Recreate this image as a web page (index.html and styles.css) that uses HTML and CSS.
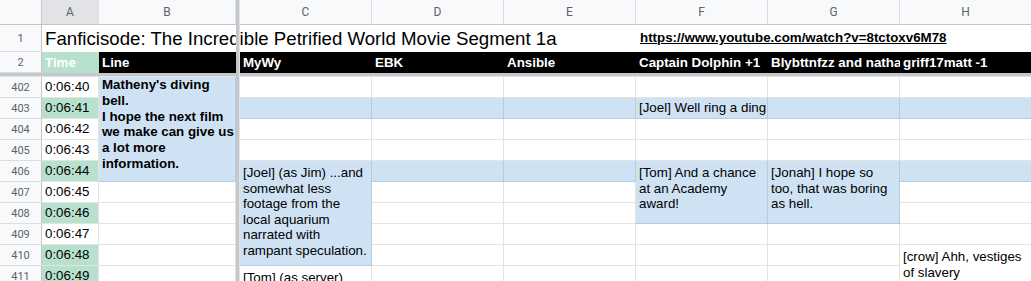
FILE: index.html
```html
<!DOCTYPE html>
<html>
	<head>
		<meta http-equiv="Content-Type" content="text/html; charset=utf-8" />
		<title>Fanficisode</title>
		<link rel="stylesheet" href="styles.css">
	</head>
	<body>
		<div class="sheet">
			<!-- frozen bars -->
			<div class="freeze-col"></div>
			<div class="freeze-row"></div>

			<!-- column headers -->
			<div class="hd hd-corner"></div>
			<div class="hd hd-col hd-active">A</div>
			<div class="hd hd-col">B</div>
			<div class="hd hd-col">C</div>
			<div class="hd hd-col">D</div>
			<div class="hd hd-col">E</div>
			<div class="hd hd-col">F</div>
			<div class="hd hd-col">G</div>
			<div class="hd hd-col">H</div>

			<!-- row 1 -->
			<div class="hd hd-row">1</div>
			<div class="cell title">Fanficisode: The Incredible Petrified World Movie Segment 1a</div>
			<div class="cell link"><span>https://www.youtube.com/watch?v=8tctoxv6M78</span></div>

			<!-- row 2 -->
			<div class="hd hd-row">2</div>
			<div class="cell th th-green">Time</div>
			<div class="cell th">Line</div>
			<div class="cell th">MyWy</div>
			<div class="cell th">EBK</div>
			<div class="cell th">Ansible</div>
			<div class="cell th">Captain Dolphin +1</div>
			<div class="cell th">Blybttnfzz and nathan</div>
			<div class="cell th">griff17matt -1</div>

			<!-- 402 -->
			<div class="hd hd-row">402</div>
			<div class="cell">0:06:40</div>
			<div class="cell blue wrap bold span5">Matheny's diving bell.<br>I hope the next film we make can give us a lot more information.</div>
			<div class="cell"></div><div class="cell"></div><div class="cell"></div>
			<div class="cell"></div><div class="cell"></div><div class="cell"></div>

			<!-- 403 -->
			<div class="hd hd-row">403</div>
			<div class="cell green">0:06:41</div>
			<div class="cell blue"></div><div class="cell blue"></div><div class="cell blue"></div>
			<div class="cell blue">[Joel] Well ring a ding</div>
			<div class="cell blue"></div><div class="cell blue"></div>

			<!-- 404 -->
			<div class="hd hd-row">404</div>
			<div class="cell">0:06:42</div>
			<div class="cell"></div><div class="cell"></div><div class="cell"></div>
			<div class="cell"></div><div class="cell"></div><div class="cell"></div>

			<!-- 405 -->
			<div class="hd hd-row">405</div>
			<div class="cell">0:06:43</div>
			<div class="cell"></div><div class="cell"></div><div class="cell"></div>
			<div class="cell"></div><div class="cell"></div><div class="cell"></div>

			<!-- 406 -->
			<div class="hd hd-row">406</div>
			<div class="cell green">0:06:44</div>
			<div class="cell blue wrap span5">[Joel] (as Jim) ...and somewhat less footage from the local aquarium narrated with rampant speculation.</div>
			<div class="cell blue"></div>
			<div class="cell blue"></div>
			<div class="cell blue wrap span3">[Tom] And a chance at an Academy award!</div>
			<div class="cell blue wrap span3">[Jonah] I hope so too, that was boring as hell.</div>
			<div class="cell blue"></div>

			<!-- 407 -->
			<div class="hd hd-row">407</div>
			<div class="cell">0:06:45</div>
			<div class="cell"></div>
			<div class="cell"></div><div class="cell"></div>
			<div class="cell"></div>

			<!-- 408 -->
			<div class="hd hd-row">408</div>
			<div class="cell green">0:06:46</div>
			<div class="cell"></div>
			<div class="cell"></div><div class="cell"></div>
			<div class="cell"></div>

			<!-- 409 -->
			<div class="hd hd-row">409</div>
			<div class="cell">0:06:47</div>
			<div class="cell"></div>
			<div class="cell"></div><div class="cell"></div>
			<div class="cell"></div><div class="cell"></div><div class="cell"></div>

			<!-- 410 -->
			<div class="hd hd-row">410</div>
			<div class="cell green">0:06:48</div>
			<div class="cell"></div>
			<div class="cell"></div><div class="cell"></div>
			<div class="cell"></div><div class="cell"></div>
			<div class="cell wrap span2">[crow] Ahh, vestiges of slavery</div>

			<!-- 411 -->
			<div class="hd hd-row">411</div>
			<div class="cell green">0:06:49</div>
			<div class="cell"></div>
			<div class="cell wrap">[Tom] (as server)</div>
			<div class="cell"></div><div class="cell"></div>
			<div class="cell"></div><div class="cell"></div>
		</div>
	</body>
</html>
```
FILE: styles.css
```css
html, body{
	margin: 0;
	padding: 0;
	background: #FFFFFF;
	overflow: hidden;
}
.sheet{
	display: grid;
	grid-template-columns: 42px 57px 137px 4px repeat(6, 132px);
	grid-template-rows: 25px 27px 21px 4px repeat(10, 21px);
	font-family: "Liberation Sans", Arial, sans-serif;
	font-size: 13.33px;
	color: #000;
}
/* frozen bars */
.freeze-col{
	grid-column: 4;
	grid-row: 1 / -1;
	background: #c4c7cb;
	border-right: 1px solid #dfe3e8;
	z-index: 2;
}
.freeze-row{
	grid-column: 1 / -1;
	grid-row: 4;
	background: #c4c7cb;
	border-bottom: 1px solid #dfe3e8;
	z-index: 1;
}
/* headers */
.hd{
	box-sizing: border-box;
	background: #f8f9fa;
	color: #5f6368;
	font-family: Roboto, "Liberation Sans", sans-serif;
	font-size: 11px;
	display: flex;
	align-items: center;
	justify-content: center;
	border-right: 1px solid #c4c7c5;
	border-bottom: 1px solid #c4c7c5;
}
.hd-col{
	font-size: 12px;
	border-right-color: #dadce0;
}
.hd-active{
	background: #e1e3e6;
}
.hd-row{
	border-bottom-color: #dadce0;
}
/* cells */
.cell{
	box-sizing: border-box;
	border-right: 1px solid #e2e3e3;
	border-bottom: 1px solid #e2e3e3;
	padding: 0 3px;
	line-height: 20px;
	white-space: nowrap;
	overflow: hidden;
}
.title{
	grid-column: 2 / 8;
	grid-row: 2;
	font-size: 18.67px;
	line-height: 28px;
	border: none;
	overflow: visible;
}
.link{
	grid-column: span 3;
	border: none;
	font-weight: bold;
	line-height: 26px;
	padding-left: 4px;
	overflow: visible;
}
.link span{
	text-decoration: underline;
}
.th{
	background: #000;
	color: #fff;
	font-weight: bold;
	border: none;
	line-height: 21px;
}
.th-green{
	background: #b7e1cd;
}
.green{
	background: #b7e1cd;
}
.blue{
	background: #cfe2f3;
	border-color: #b6cbe0;
}
.wrap{
	white-space: normal;
	line-height: 15.6px;
	padding-top: 4px;
}
.bold{
	font-weight: bold;
	line-height: 15.8px;
	padding: 0 0 0 3px;
}
.span5{
	grid-row: span 5;
}
.span3{
	grid-row: span 3;
}
.span2{
	grid-row: span 2;
}
```
